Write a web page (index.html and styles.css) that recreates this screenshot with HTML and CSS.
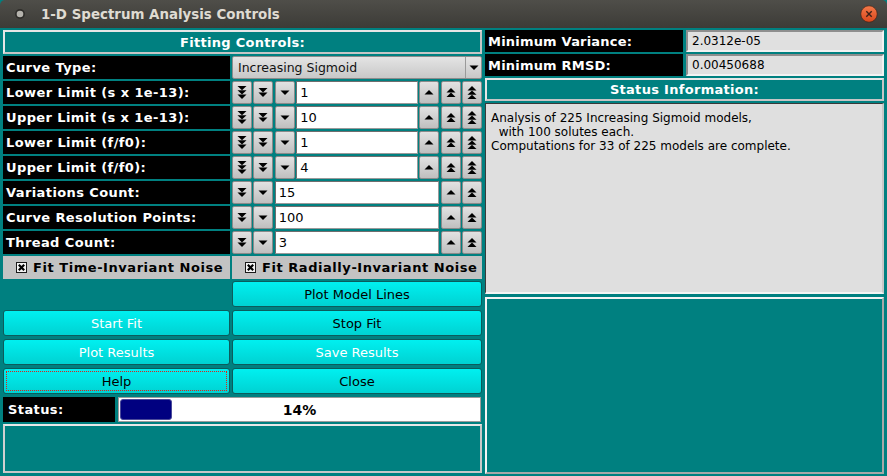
FILE: index.html
```html
<!DOCTYPE html>
<html>
<head>
<meta charset="utf-8">
<link rel="stylesheet" href="styles.css">
</head>
<body>
<svg width="0" height="0" class="defs">
  <defs>
    <symbol id="d1" viewBox="0 0 10 13"><polygon points="0.5,4.5 9.5,4.5 5,9"/></symbol>
    <symbol id="d2" viewBox="0 0 10 13"><polygon points="0.5,2 9.5,2 5,6.5"/><polygon points="0.5,6.5 9.5,6.5 5,11"/></symbol>
    <symbol id="d3" viewBox="0 0 10 13"><polygon points="0.5,0 9.5,0 5,4.3"/><polygon points="0.5,4.3 9.5,4.3 5,8.6"/><polygon points="0.5,8.6 9.5,8.6 5,12.9"/></symbol>
    <symbol id="u1" viewBox="0 0 10 13"><polygon points="0.5,8.5 9.5,8.5 5,4"/></symbol>
    <symbol id="u2" viewBox="0 0 10 13"><polygon points="0.5,11 9.5,11 5,6.5"/><polygon points="0.5,6.5 9.5,6.5 5,2"/></symbol>
    <symbol id="u3" viewBox="0 0 10 13"><polygon points="0.5,13 9.5,13 5,8.7"/><polygon points="0.5,8.7 9.5,8.7 5,4.4"/><polygon points="0.5,4.4 9.5,4.4 5,0.1"/></symbol>
    <symbol id="chk" viewBox="0 0 11 11"><rect x="0.5" y="0.5" width="10" height="10" fill="#f4f4f4" stroke="#1a1a1a"/><path d="M2.8 2.8 L8.2 8.2 M8.2 2.8 L2.8 8.2" stroke="#000" stroke-width="2.2"/></symbol>
  </defs>
</svg>
<div class="window">
  <div class="titlebar">
    <svg class="menu-dot" width="12" height="12" viewBox="0 0 12 12"><circle cx="6" cy="6" r="5" fill="#2e2d2a"/><circle cx="6" cy="6" r="3.3" fill="#b5b3ad"/></svg>
    <span class="title">1-D Spectrum Analysis Controls</span>
    <svg class="close-btn" width="18" height="18" viewBox="0 0 18 18">
      <defs><linearGradient id="og" x1="0" y1="0" x2="0" y2="1"><stop offset="0" stop-color="#f47a4a"/><stop offset="1" stop-color="#d8461c"/></linearGradient></defs>
      <circle cx="9" cy="9" r="8.2" fill="url(#og)" stroke="#3a1e12" stroke-width="0.6"/>
      <path d="M6.3 6.3 L11.7 11.7 M11.7 6.3 L6.3 11.7" stroke="#3b2018" stroke-width="1.4"/>
    </svg>
  </div>
  <div class="content">
    <div class="left">
      <div class="banner">Fitting Controls:</div>
      <div class="row">
        <div class="label">Curve Type:</div>
        <div class="combo"><span class="combo-text">Increasing Sigmoid</span><span class="combo-arrow"><svg width="10" height="13"><use href="#d1"/></svg></span></div>
      </div>
      <div class="row">
        <div class="label">Lower Limit (s x 1e-13):</div>
        <div class="spin">
          <span class="sb"><svg width="10" height="13"><use href="#d3"/></svg></span>
          <span class="sb"><svg width="10" height="13"><use href="#d2"/></svg></span>
          <span class="sb"><svg width="10" height="13"><use href="#d1"/></svg></span>
          <span class="field">1</span>
          <span class="sb"><svg width="10" height="13"><use href="#u1"/></svg></span>
          <span class="sb"><svg width="10" height="13"><use href="#u2"/></svg></span>
          <span class="sb"><svg width="10" height="13"><use href="#u3"/></svg></span>
        </div>
      </div>
      <div class="row">
        <div class="label">Upper Limit (s x 1e-13):</div>
        <div class="spin">
          <span class="sb"><svg width="10" height="13"><use href="#d3"/></svg></span>
          <span class="sb"><svg width="10" height="13"><use href="#d2"/></svg></span>
          <span class="sb"><svg width="10" height="13"><use href="#d1"/></svg></span>
          <span class="field">10</span>
          <span class="sb"><svg width="10" height="13"><use href="#u1"/></svg></span>
          <span class="sb"><svg width="10" height="13"><use href="#u2"/></svg></span>
          <span class="sb"><svg width="10" height="13"><use href="#u3"/></svg></span>
        </div>
      </div>
      <div class="row">
        <div class="label">Lower Limit (f/f0):</div>
        <div class="spin">
          <span class="sb"><svg width="10" height="13"><use href="#d3"/></svg></span>
          <span class="sb"><svg width="10" height="13"><use href="#d2"/></svg></span>
          <span class="sb"><svg width="10" height="13"><use href="#d1"/></svg></span>
          <span class="field">1</span>
          <span class="sb"><svg width="10" height="13"><use href="#u1"/></svg></span>
          <span class="sb"><svg width="10" height="13"><use href="#u2"/></svg></span>
          <span class="sb"><svg width="10" height="13"><use href="#u3"/></svg></span>
        </div>
      </div>
      <div class="row">
        <div class="label">Upper Limit (f/f0):</div>
        <div class="spin">
          <span class="sb"><svg width="10" height="13"><use href="#d3"/></svg></span>
          <span class="sb"><svg width="10" height="13"><use href="#d2"/></svg></span>
          <span class="sb"><svg width="10" height="13"><use href="#d1"/></svg></span>
          <span class="field">4</span>
          <span class="sb"><svg width="10" height="13"><use href="#u1"/></svg></span>
          <span class="sb"><svg width="10" height="13"><use href="#u2"/></svg></span>
          <span class="sb"><svg width="10" height="13"><use href="#u3"/></svg></span>
        </div>
      </div>
      <div class="row">
        <div class="label">Variations Count:</div>
        <div class="spin">
          <span class="sb"><svg width="10" height="13"><use href="#d2"/></svg></span>
          <span class="sb"><svg width="10" height="13"><use href="#d1"/></svg></span>
          <span class="field">15</span>
          <span class="sb"><svg width="10" height="13"><use href="#u1"/></svg></span>
          <span class="sb"><svg width="10" height="13"><use href="#u2"/></svg></span>
        </div>
      </div>
      <div class="row">
        <div class="label">Curve Resolution Points:</div>
        <div class="spin">
          <span class="sb"><svg width="10" height="13"><use href="#d2"/></svg></span>
          <span class="sb"><svg width="10" height="13"><use href="#d1"/></svg></span>
          <span class="field">100</span>
          <span class="sb"><svg width="10" height="13"><use href="#u1"/></svg></span>
          <span class="sb"><svg width="10" height="13"><use href="#u2"/></svg></span>
        </div>
      </div>
      <div class="row">
        <div class="label">Thread Count:</div>
        <div class="spin">
          <span class="sb"><svg width="10" height="13"><use href="#d2"/></svg></span>
          <span class="sb"><svg width="10" height="13"><use href="#d1"/></svg></span>
          <span class="field">3</span>
          <span class="sb"><svg width="10" height="13"><use href="#u1"/></svg></span>
          <span class="sb"><svg width="10" height="13"><use href="#u2"/></svg></span>
        </div>
      </div>
      <div class="row">
        <div class="check"><svg width="11" height="11"><use href="#chk"/></svg><span>Fit Time-Invariant Noise</span></div>
        <div class="check"><svg width="11" height="11"><use href="#chk"/></svg><span>Fit Radially-Invariant Noise</span></div>
      </div>
      <div class="btnrow first">
        <div></div>
        <div class="btn">Plot Model Lines</div>
      </div>
      <div class="btnrow">
        <div class="btn light">Start Fit</div>
        <div class="btn">Stop Fit</div>
      </div>
      <div class="btnrow">
        <div class="btn light">Plot Results</div>
        <div class="btn light">Save Results</div>
      </div>
      <div class="btnrow">
        <div class="btn focus"><span class="focus-ring">Help</span></div>
        <div class="btn">Close</div>
      </div>
      <div class="statusrow">
        <div class="label">Status:</div>
        <div class="progress"><div class="fill" style="width:52px"></div><span class="pct">14%</span></div>
      </div>
      <div class="msgbox"></div>
    </div>
    <div class="right">
      <div class="vrow">
        <div class="label">Minimum Variance:</div>
        <div class="value">2.0312e-05</div>
      </div>
      <div class="vrow">
        <div class="label">Minimum RMSD:</div>
        <div class="value">0.00450688</div>
      </div>
      <div class="banner rbanner">Status Information:</div>
      <div class="info">Analysis of 225 Increasing Sigmoid models,
  with 100 solutes each.
Computations for 33 of 225 models are complete.</div>
      <div class="rbox"></div>
    </div>
  </div>
</div>
</body>
</html>
```
FILE: styles.css
```css
* { box-sizing: border-box; }
html, body { margin: 0; padding: 0; }
body {
  width: 887px;
  height: 476px;
  overflow: hidden;
  font-family: "DejaVu Sans", "Liberation Sans", sans-serif;
  background: #008080;
}
.defs { position: absolute; width: 0; height: 0; }
.window { width: 887px; height: 476px; display: flex; flex-direction: column; }
.titlebar {
  height: 28px;
  flex: none;
  background: linear-gradient(#4f4e49, #3c3b37);
  display: flex;
  align-items: center;
  padding: 0 0 0 14px;
  border-radius: 5px 5px 0 0;
}
.menu-dot { margin-right: 15px; }
.title {
  color: #dfdbd2;
  font-weight: bold;
  font-size: 13.4px;
  flex: 1;
  padding-top: 1px;
}
.close-btn { margin-right: 9px; }
.content {
  flex: 1;
  display: flex;
  gap: 3px;
  padding: 2px 3px 0 3px;
  background: #008080;
}
.left { width: 479px; display: flex; flex-direction: column; gap: 2px; }
.right { width: 399px; display: flex; flex-direction: column; }
.banner {
  height: 24px;
  border: 2px solid #c6c6c6;
  border-top-color: #e6e6e6;
  border-left-color: #e6e6e6;
  background: #008080;
  color: #fff;
  font-weight: bold;
  font-size: 13px;
  letter-spacing: 0.3px;
  display: flex;
  align-items: center;
  justify-content: center;
}
.row { height: 23px; display: grid; grid-template-columns: 227px 250px; gap: 2px; }
.label {
  background: #000;
  color: #fff;
  font-weight: bold;
  font-size: 13px;
  display: flex;
  align-items: center;
  padding-left: 3px;
  letter-spacing: 0.4px;
}
.combo {
  background: linear-gradient(#e4e4e4, #c8c8c8);
  border: 1px solid #8c8c8c;
  border-radius: 2px;
  display: flex;
  align-items: center;
  font-size: 12.5px;
  color: #111;
}
.combo-text { flex: 1; padding-left: 5px; }
.combo-arrow {
  width: 16px;
  height: 100%;
  border-left: 1px solid #9a9a9a;
  display: flex;
  align-items: center;
  justify-content: center;
}
.spin { display: flex; gap: 1.4px; }
.sb {
  width: 20px;
  flex: none;
  background: linear-gradient(#e2e2e2, #bfbfbf);
  border: 1px solid #8a8a8a;
  border-radius: 2px;
  display: flex;
  align-items: center;
  justify-content: center;
}
.sb svg, .combo-arrow svg { fill: #000; }
.field {
  flex: 1;
  background: #fff;
  border: 1px solid #9a9a9a;
  border-top-color: #6e6e6e;
  border-left-color: #6e6e6e;
  font-size: 13px;
  display: flex;
  align-items: center;
  padding-left: 3px;
  color: #000;
}
.check {
  background: #c3c3c3;
  display: flex;
  align-items: center;
  font-weight: bold;
  font-size: 13px;
  color: #000;
  letter-spacing: 0.55px;
}
.check svg { margin: 0 6px 0 13px; }
.btnrow { height: 26px; display: grid; grid-template-columns: 227px 250px; gap: 2px; margin-top: 1px; }
.btnrow.first { margin-top: 0; }
.btn {
  background: linear-gradient(#00f0f0, #00d2d2);
  border: 1px solid #0b5c5c;
  border-radius: 3px;
  display: flex;
  align-items: center;
  justify-content: center;
  font-size: 13px;
  color: #000;
}
.btn.light { color: #fff; }
.btn.focus { padding: 2px; }
.focus-ring {
  width: 100%;
  height: 100%;
  border: 1px dotted #e0201a;
  display: flex;
  align-items: center;
  justify-content: center;
}
.statusrow { height: 25px; display: grid; grid-template-columns: 112px 363px; gap: 3px; margin-top: 1px; }
.statusrow .label { padding-left: 5px; }
.progress {
  position: relative;
  background: #fff;
  border: 1px solid #9c9c9c;
  padding: 1px;
  display: flex;
}
.fill { background: #000080; border-radius: 3px; height: 100%; border: 1px solid #4a4a9a; }
.pct {
  position: absolute;
  left: 0; right: 0; top: 0; bottom: 0;
  display: flex;
  align-items: center;
  justify-content: center;
  font-weight: bold;
  font-size: 14px;
  color: #000;
}
.msgbox {
  height: 49px;
  border: 2px solid #c8c8c8;
  border-top-color: #e8e8e8;
  border-left-color: #d0d0d0;
  background: #008080;
}
.vrow { height: 22px; display: grid; grid-template-columns: 198px 198px; gap: 3px; margin-bottom: 2px; }
.vrow .label { padding-left: 3px; letter-spacing: 0.2px; }
.value {
  background: #e0e0e0;
  border: 2px solid #f2f2f2;
  border-top-color: #8e8e8e;
  border-left-color: #8e8e8e;
  font-size: 12px;
  display: flex;
  align-items: center;
  padding-left: 4px;
  color: #000;
}
.rbanner { height: 23px; }
.info {
  margin-top: 2px;
  height: 191px;
  background: #dfdfdf;
  border: 1px solid #fff;
  border-top-color: #3a3a3a;
  border-left-color: #3a3a3a;
  border-right: 2px solid #c8c8c8;
  border-bottom: 2px solid #f4f4f4;
  font-size: 12px;
  line-height: 14px;
  color: #000;
  white-space: pre;
  padding: 7px 0 0 5px;
}
.rbox {
  margin-top: 3px;
  height: 177px;
  border: 2px solid #f4f4f4;
  border-right-color: #a8a8a8;
  border-bottom-color: #a8a8a8;
  background: #008080;
}
```
